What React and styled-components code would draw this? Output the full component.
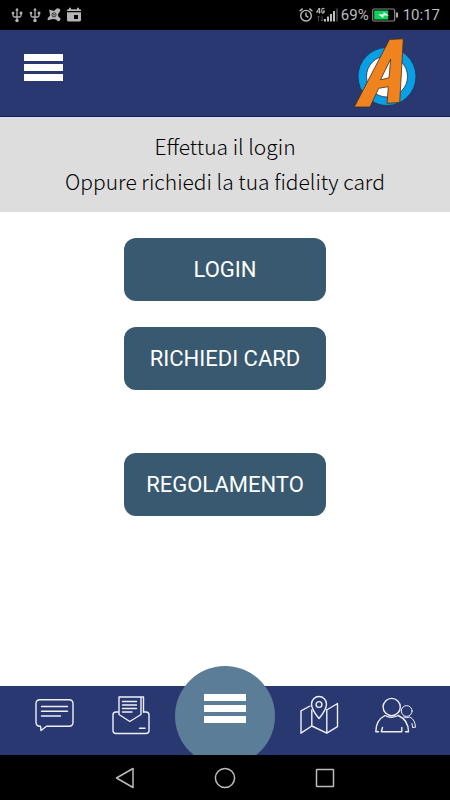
import styled, { createGlobalStyle } from 'styled-components';

const usbIcon = (
  <svg width="12" height="16" viewBox="0 0 12 16" fill="none" stroke="#b4b4b4" strokeWidth="1.3">
    <path d="M6 2v11M2 6v2.500q0 1.500 1.500 1.500h5Q10 10 10 8.500V6" />
    <path d="M4.200 3.600L6 .8l1.800 2.800z" fill="#b4b4b4" stroke="none" />
    <circle cx="6" cy="13.500" r="1.700" fill="#b4b4b4" stroke="none" />
    <circle cx="2" cy="6" r="1.300" fill="#b4b4b4" stroke="none" />
    <path d="M8.700 4.700h2.600v2.600H8.700z" fill="#b4b4b4" stroke="none" />
  </svg>
);

function App() {
  return (
    <Screen>
      <Global />
      <StatusBar>
        <StatusGroup $gap={6}>
          {usbIcon}
          {usbIcon}
          <svg width="14" height="16" viewBox="0 0 16 16">
            <path
              d="M2.500 1.800L8 3.500l2.600-2.700Q12.500-.4 14.500 1q1.800 2-.6 4L12.500 7l.6 3 2 1.500q1.200 2.800-2 3.500-1.600 0-2.600-1.800L6.500 12.500 1 14 .6 12 3.500 8.500z"
              fill="#b4b4b4"
            />
            <circle cx="8" cy="7.800" r="2.400" fill="none" stroke="#222" strokeWidth="1" />
            <circle cx="8" cy="7.800" r=".9" fill="#222" />
          </svg>
          <svg width="14" height="16" viewBox="0 0 14 16">
            <path d="M2 .8h2v1.400h6V.8h2v1.400h1q1 0 1 1V4H0v-.8q0-1 1-1h1z" fill="#b4b4b4" />
            <path d="M0 5.200h14V13q0 1.500-1.500 1.500h-11Q0 14.500 0 13zM7 8v4h4V8z" fill="#b4b4b4" fillRule="evenodd" />
          </svg>
        </StatusGroup>
        <StatusGroup $gap={3}>
          <svg width="14" height="16" viewBox="0 0 14 16" fill="none" stroke="#bdbdbd" strokeWidth="1.400">
            <circle cx="7" cy="8.700" r="5.300" />
            <path d="M7 5.500v3.400l2.400 1.400M.6 4.200l3-2.600M13.400 4.200l-3-2.600" />
          </svg>
          <svg width="22" height="16" viewBox="0 0 22 16">
            <path
              d="M3.300 1L.8 5h3.800M3.600 1v5.500M8.300 2.200Q8 1.200 7 1.200 5.800 1.200 5.800 3v1.500q0 1.600 1.200 1.600 1.300 0 1.300-2H7"
              fill="none"
              stroke="#bdbdbd"
              strokeWidth="1.100"
            />
            <path d="M2.500 9v5M1 10.500L2.500 9 4 10.500M6 9v5M4.700 12.500L6 14l1.500-1.500" fill="none" stroke="#4a4a4a" />
            <path d="M8 12h2v2.500H8zM11 9.500h2v5h-2zM14 7h2v7.500h-2zM17 4h2v10.500h-2z" fill="#bdbdbd" />
            <path d="M20 1.500h2v13h-2z" fill="#3c3c3c" />
          </svg>
          <StatusText>69%</StatusText>
          <svg width="28" height="14" viewBox="0 0 28 14">
            <rect x=".7" y="1" width="22" height="12" rx="1.500" fill="none" stroke="#8c8c8c" strokeWidth="1.200" />
            <path d="M2.200 2.500h14v9h-14z" fill="#0bd45b" />
            <path d="M24 4.500h2v5h-2z" fill="#aaa" />
            <path d="M6 6.500l5.500-.3V4L17 7.500h-5.500V10z" fill="#eaffef" />
          </svg>
          <StatusText>10:17</StatusText>
        </StatusGroup>
      </StatusBar>

      <Header>
        <MenuButton aria-label="Menu">
          <Bars $width={39} $gap={3}>
            <i /><i /><i />
          </Bars>
        </MenuButton>
        <svg width="64" height="72" viewBox="0 0 64 72" role="img" aria-label="Logo">
          <circle cx="34" cy="39.500" r="24.700" fill="#fff" stroke="#089fe5" strokeWidth="8.400" />
          <circle cx="34" cy="39.500" r="29" fill="none" stroke="#26304f" strokeWidth=".8" />
          <circle cx="34" cy="39.500" r="20.500" fill="none" stroke="#26304f" strokeWidth=".8" />
          <path
            d="M36.500 2.400L50.300 1.800 46.700 65.500 34 66.300 35.300 49.700 25.700 51.300 17 70H1.300zM37.700 22L27.500 42.800 36 40.800z"
            fill="#f0831d"
            stroke="#3a3027"
            strokeWidth=".8"
            fillRule="evenodd"
          />
        </svg>
      </Header>

      <Message>
        Effettua il login
        <br />
        Oppure richiedi la tua fidelity card
      </Message>

      <Main>
        <ActionButton>LOGIN</ActionButton>
        <ActionButton>RICHIEDI CARD</ActionButton>
        <ActionButton $apart>REGOLAMENTO</ActionButton>
      </Main>

      <TabBar>
        <Tab aria-label="Messaggi">
          <TabIcon width="42" height="42" viewBox="0 0 42 42">
            <path d="M8 5.700h29q4 0 4 4v18.500q0 4-4 4H14.500L9 36.500l-.5-4.300H8q-4 0-4-4V9.700q0-4 4-4z" />
            <path d="M9.500 12.500h26M9.500 17.200h26M9.500 22h19" />
          </TabIcon>
        </Tab>
        <Tab aria-label="Posta">
          <TabIcon width="42" height="42" viewBox="0 0 42 42">
            <path d="M8.500 18H6q-3 0-3 3v15.500q0 3 3 3h30q3 0 3-3V21q0-3-3-3h-2.500" />
            <path d="M9 3h22v17.500l-11.200 7L9 20.500zM31 3h2.500v15" />
            <path d="M12.500 7.500h14M12.500 11h14M12.500 14.500h14M12.500 18h9.500M29.500 34.300h5.500" />
          </TabIcon>
        </Tab>
        <CenterButton aria-label="Apri menu">
          <Bars $width={42} $gap={4}>
            <i /><i /><i />
          </Bars>
        </CenterButton>
        <Tab aria-label="Mappa">
          <TabIcon width="42" height="42" viewBox="0 0 42 42">
            <path d="M12 12L3 16.800v22.400L13.800 32l15 7.200 10.700-6.500V9.500L29.500 15.500M13.800 16v16M28.800 15.500v23.700" />
            <path d="M21 24.500Q13.500 15.500 13.500 10a7.500 7.500 0 0 1 15 0Q28.500 15.500 21 24.500z" />
            <circle cx="21" cy="10.500" r="2.900" />
          </TabIcon>
        </Tab>
        <Tab aria-label="Amici">
          <TabIcon width="44" height="42" viewBox="0 0 44 42">
            <circle cx="16.700" cy="13" r="8.600" />
            <path d="M3.500 37.700H.8q0-11.500 9.200-16.200 6.500 3.500 13.300 0 10.200 4.700 10.200 16.200h-3M7.500 33.500l-1.200 4.200h20.500V33.500" />
            <g strokeWidth="1">
              <circle cx="31.700" cy="17" r="5.400" />
              <path d="M28.700 23q3 1.500 6.200 0 5.500 3 5.500 10.300h-2.700M36.900 29.500l.8 3.800" />
            </g>
          </TabIcon>
        </Tab>
      </TabBar>

      <SystemNav>
        <NavButton aria-label="Indietro">
          <svg width="22" height="24" viewBox="0 0 22 24">
            <path d="M19 2.500v19L2.500 12z" strokeLinejoin="round" />
          </svg>
        </NavButton>
        <NavButton aria-label="Home">
          <svg width="24" height="24" viewBox="0 0 24 24">
            <circle cx="12" cy="12" r="9.600" />
          </svg>
        </NavButton>
        <NavButton aria-label="Recenti">
          <svg width="22" height="24" viewBox="0 0 22 24">
            <rect x="2.500" y="3.500" width="17" height="17" rx=".5" />
          </svg>
        </NavButton>
      </SystemNav>
    </Screen>
  );
}

const Global = createGlobalStyle`
  *{
    box-sizing: border-box;
  }
  body{
    margin: 0;
    background: #fff;
    font-family: Roboto, "Liberation Sans", sans-serif;
  }
  button{
    border: none;
    padding: 0;
    background: none;
    font-family: inherit;
    cursor: pointer;
  }
  svg{
    display: block;
    flex: none;
  }
`

const Screen = styled.div`
  display: flex;
  flex-direction: column;
  min-height: 100vh;
`

const StatusBar = styled.div`
  display: flex;
  align-items: center;
  justify-content: space-between;
  height: 30px;
  padding: 0 10px 0 11px;
  background: #000;
  color: #bdbdbd;
`

const StatusGroup = styled.div`
  display: flex;
  align-items: center;
  gap: ${({ $gap }) => $gap}px;
`

const StatusText = styled.span`
  font-size: 15px;
  line-height: 20px;
`

const Header = styled.header`
  display: flex;
  align-items: center;
  justify-content: space-between;
  height: 87px;
  padding: 0 33px 0 24px;
  background: #2a3871;
  border-bottom: 1px solid #0a2468;
`

const Bars = styled.span`
  display: flex;
  flex-direction: column;
  gap: ${({ $gap }) => $gap}px;
  width: ${({ $width }) => $width}px;
  i{
    height: 7px;
    background: #fff;
  }
`

const MenuButton = styled.button`
  padding-bottom: 12px;
`

const Message = styled.p`
  margin: 0;
  padding: 12px 0 13px;
  background: #ddd;
  color: #000;
  text-align: center;
  font-family: "Noto Sans CJK JP", "Noto Sans", sans-serif;
  font-weight: 300;
  font-size: 21px;
  line-height: 35px;
`

const Main = styled.main`
  flex: 1;
  display: flex;
  flex-direction: column;
  align-items: center;
  gap: 26px;
  padding: 26px 0 50px;
`

const ActionButton = styled.button`
  width: 45%;
  min-width: 200px;
  height: 63px;
  margin-top: ${({ $apart }) => ($apart ? '37px' : '0')};
  border-radius: 12px;
  background: #38596f;
  color: #fff;
  font-size: 22px;
  line-height: 28px;
`

const TabBar = styled.nav`
  position: relative;
  display: grid;
  grid-template-columns: 1fr 1fr 110px 1fr 1fr;
  grid-template-rows: 69px;
  height: 69px;
  padding: 0 14px;
  background: #2a3871;
`

const Tab = styled.button`
  display: flex;
  align-items: center;
  justify-content: center;
  padding-bottom: 11px;
`

const TabIcon = styled.svg`
  fill: none;
  stroke: #eef0f8;
  stroke-width: 1.4;
  stroke-linejoin: round;
  stroke-linecap: round;
`

/* rises above the tab bar, its lower edge goes under the system nav */
const CenterButton = styled.button`
  display: flex;
  align-items: center;
  justify-content: center;
  justify-self: center;
  width: 100px;
  height: 100px;
  margin-top: -20px;
  padding-bottom: 15px;
  border-radius: 50%;
  background: #5b7d97;
`

const SystemNav = styled.div`
  position: relative;
  z-index: 1;
  display: grid;
  grid-template-columns: repeat(3, 1fr);
  height: 45px;
  padding: 0 75px;
  background: #000;
`

const NavButton = styled.button`
  display: flex;
  align-items: center;
  justify-content: center;
  svg{
    fill: none;
    stroke: #bcbcbc;
    stroke-width: 1.5;
  }
`

export default App;
